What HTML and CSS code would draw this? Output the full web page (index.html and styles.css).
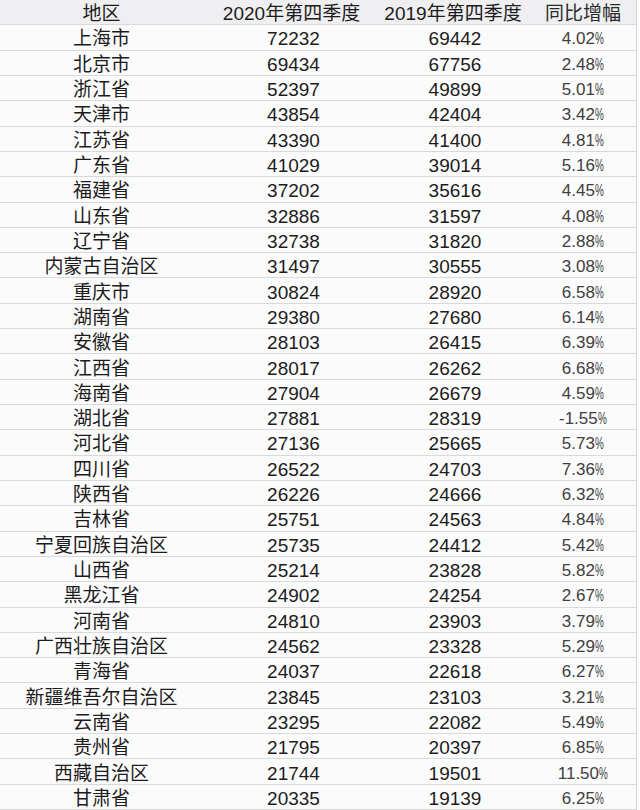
FILE: index.html
```html
<!DOCTYPE html>
<html lang="zh-CN">
<head>
<meta charset="utf-8">
<title>2020年第四季度</title>
<link rel="stylesheet" href="styles.css">
</head>
<body>
<div class="sheet">
  <div class="row head"><div class="c name">地区</div><div class="c n1">2020年第四季度</div><div class="c n2">2019年第四季度</div><div class="c pct">同比增幅</div></div>
  <div class="row"><div class="c name">上海市</div><div class="c n1">72232</div><div class="c n2">69442</div><div class="c pct">4.02<span class="p">%</span></div></div>
  <div class="row"><div class="c name">北京市</div><div class="c n1">69434</div><div class="c n2">67756</div><div class="c pct">2.48<span class="p">%</span></div></div>
  <div class="row"><div class="c name">浙江省</div><div class="c n1">52397</div><div class="c n2">49899</div><div class="c pct">5.01<span class="p">%</span></div></div>
  <div class="row"><div class="c name">天津市</div><div class="c n1">43854</div><div class="c n2">42404</div><div class="c pct">3.42<span class="p">%</span></div></div>
  <div class="row"><div class="c name">江苏省</div><div class="c n1">43390</div><div class="c n2">41400</div><div class="c pct">4.81<span class="p">%</span></div></div>
  <div class="row"><div class="c name">广东省</div><div class="c n1">41029</div><div class="c n2">39014</div><div class="c pct">5.16<span class="p">%</span></div></div>
  <div class="row"><div class="c name">福建省</div><div class="c n1">37202</div><div class="c n2">35616</div><div class="c pct">4.45<span class="p">%</span></div></div>
  <div class="row"><div class="c name">山东省</div><div class="c n1">32886</div><div class="c n2">31597</div><div class="c pct">4.08<span class="p">%</span></div></div>
  <div class="row"><div class="c name">辽宁省</div><div class="c n1">32738</div><div class="c n2">31820</div><div class="c pct">2.88<span class="p">%</span></div></div>
  <div class="row"><div class="c name">内蒙古自治区</div><div class="c n1">31497</div><div class="c n2">30555</div><div class="c pct">3.08<span class="p">%</span></div></div>
  <div class="row"><div class="c name">重庆市</div><div class="c n1">30824</div><div class="c n2">28920</div><div class="c pct">6.58<span class="p">%</span></div></div>
  <div class="row"><div class="c name">湖南省</div><div class="c n1">29380</div><div class="c n2">27680</div><div class="c pct">6.14<span class="p">%</span></div></div>
  <div class="row"><div class="c name">安徽省</div><div class="c n1">28103</div><div class="c n2">26415</div><div class="c pct">6.39<span class="p">%</span></div></div>
  <div class="row"><div class="c name">江西省</div><div class="c n1">28017</div><div class="c n2">26262</div><div class="c pct">6.68<span class="p">%</span></div></div>
  <div class="row"><div class="c name">海南省</div><div class="c n1">27904</div><div class="c n2">26679</div><div class="c pct">4.59<span class="p">%</span></div></div>
  <div class="row"><div class="c name">湖北省</div><div class="c n1">27881</div><div class="c n2">28319</div><div class="c pct">-1.55<span class="p">%</span></div></div>
  <div class="row"><div class="c name">河北省</div><div class="c n1">27136</div><div class="c n2">25665</div><div class="c pct">5.73<span class="p">%</span></div></div>
  <div class="row"><div class="c name">四川省</div><div class="c n1">26522</div><div class="c n2">24703</div><div class="c pct">7.36<span class="p">%</span></div></div>
  <div class="row"><div class="c name">陕西省</div><div class="c n1">26226</div><div class="c n2">24666</div><div class="c pct">6.32<span class="p">%</span></div></div>
  <div class="row"><div class="c name">吉林省</div><div class="c n1">25751</div><div class="c n2">24563</div><div class="c pct">4.84<span class="p">%</span></div></div>
  <div class="row"><div class="c name">宁夏回族自治区</div><div class="c n1">25735</div><div class="c n2">24412</div><div class="c pct">5.42<span class="p">%</span></div></div>
  <div class="row"><div class="c name">山西省</div><div class="c n1">25214</div><div class="c n2">23828</div><div class="c pct">5.82<span class="p">%</span></div></div>
  <div class="row"><div class="c name">黑龙江省</div><div class="c n1">24902</div><div class="c n2">24254</div><div class="c pct">2.67<span class="p">%</span></div></div>
  <div class="row"><div class="c name">河南省</div><div class="c n1">24810</div><div class="c n2">23903</div><div class="c pct">3.79<span class="p">%</span></div></div>
  <div class="row"><div class="c name">广西壮族自治区</div><div class="c n1">24562</div><div class="c n2">23328</div><div class="c pct">5.29<span class="p">%</span></div></div>
  <div class="row"><div class="c name">青海省</div><div class="c n1">24037</div><div class="c n2">22618</div><div class="c pct">6.27<span class="p">%</span></div></div>
  <div class="row"><div class="c name">新疆维吾尔自治区</div><div class="c n1">23845</div><div class="c n2">23103</div><div class="c pct">3.21<span class="p">%</span></div></div>
  <div class="row"><div class="c name">云南省</div><div class="c n1">23295</div><div class="c n2">22082</div><div class="c pct">5.49<span class="p">%</span></div></div>
  <div class="row"><div class="c name">贵州省</div><div class="c n1">21795</div><div class="c n2">20397</div><div class="c pct">6.85<span class="p">%</span></div></div>
  <div class="row"><div class="c name">西藏自治区</div><div class="c n1">21744</div><div class="c n2">19501</div><div class="c pct">11.50<span class="p">%</span></div></div>
  <div class="row"><div class="c name">甘肃省</div><div class="c n1">20335</div><div class="c n2">19139</div><div class="c pct">6.25<span class="p">%</span></div></div>
</div>
</body>
</html>
```

FILE: styles.css
```css
html, body {
  margin: 0;
  padding: 0;
  background: #ffffff;
}
.sheet {
  width: 637px;
  height: 810px;
  display: flex;
  flex-direction: column;
  border-right: 1px solid #d4d4d6;
  box-sizing: border-box;
  font-family: "Liberation Sans", "Noto Sans CJK SC", sans-serif;
  font-size: 19px;
  color: #1c1c1c;
  background: #fcfbfc;
}
.row {
  flex: 1 1 0;
  display: grid;
  grid-template-columns: 203px 173px 154px 106px;
  align-items: center;
  border-bottom: 1px solid #d9d9dc;
  box-sizing: border-box;
}
.row.head {
  background: #efeff1;
}
.c {
  text-align: center;
  white-space: nowrap;
  line-height: 1;
  padding-top: 3px;
}
.n1 {
  padding-left: 8px;
}
.n2 {
  padding-left: 4px;
}
.head .n1 { padding-left: 4px; }
.head .n2 { padding-left: 0; }
.pct {
  font-size: 17px;
  color: #404040;
}
.head .pct {
  font-size: 19px;
  color: #2a2a2a;
}
.p {
  display: inline-block;
  transform: scaleX(0.62);
  transform-origin: left center;
  margin-right: -5px;
  font-size: 16px;
}
```
